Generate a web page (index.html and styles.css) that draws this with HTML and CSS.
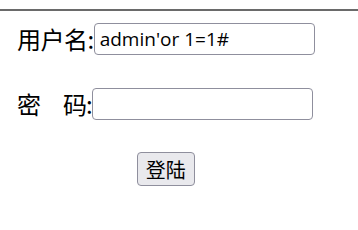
FILE: index.html
```html
<!DOCTYPE html>
<html lang="zh-CN">
<head>
  <meta charset="UTF-8" />
  <meta name="viewport" content="width=device-width, initial-scale=1.0" />
  <title>登陆</title>
  <link rel="stylesheet" href="styles.css">
</head>
<body>
  <div class="topline"></div>

  <form class="login" onsubmit="return false">
    <div class="row">
      <label for="user">用户名:</label>
      <input type="text" id="user" name="user" value="admin'or 1=1#" />
    </div>
    <div class="row">
      <label for="pass" class="narrow">密　码:</label>
      <input type="password" id="pass" name="pass" />
    </div>
    <div class="row submit">
      <button type="submit">登陆</button>
    </div>
  </form>
</body>
</html>
```

FILE: styles.css
```css
body {
  margin: 0;
  background: #fff;
  font-family: "Noto Sans CJK SC", "Noto Sans", sans-serif;
  color: #000;
}
.topline {
  margin-top: 9px;
  height: 2px;
  background: #6a6a6a;
}
.login {
  display: inline-flex;
  flex-direction: column;
  gap: 33px;
  padding: 12px 0 0 17px;
}
.row {
  display: flex;
  align-items: center;
  height: 32px;
}
.row label {
  font-size: 24px;
  line-height: 32px;
  letter-spacing: -0.5px;
}
.row label.narrow {
  letter-spacing: -1px;
}
.row input {
  box-sizing: border-box;
  width: 221px;
  height: 32px;
  margin: 0;
  padding: 0 5px;
  border: 1px solid #8f8f9d;
  border-radius: 4px;
  font-family: "Open Sans", sans-serif;
  font-size: 19px;
  color: #000;
  background: #fff;
}
.submit {
  justify-content: center;
  height: 34px;
  margin-top: -1px;
}
button {
  box-sizing: border-box;
  height: 34px;
  padding: 0 8px;
  border: 1px solid #8f8f9d;
  border-radius: 4px;
  background: #e9e9ed;
  font-family: "Noto Sans CJK SC", sans-serif;
  font-size: 20px;
  color: #000;
}
```
